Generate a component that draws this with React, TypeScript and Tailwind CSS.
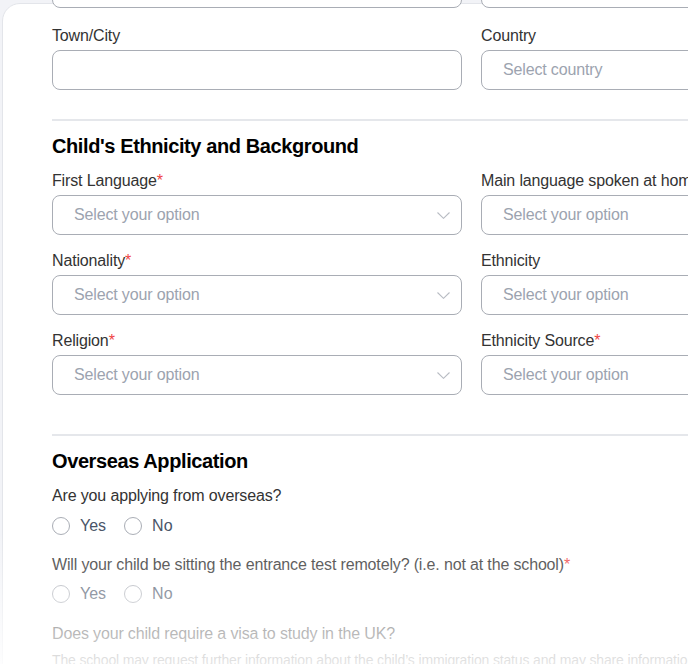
import React from "react"

function Label({ text, required }: { text: string; required?: boolean }) {
  return (
    <div className="h-[24px] leading-[24px] text-[16px] tracking-[-0.15px] text-[#333] whitespace-nowrap">
      {text}
      {required && <span className="text-[#ef4444]">*</span>}
    </div>
  )
}

function Chevron() {
  return (
    <svg width="13" height="7" viewBox="0 0 13 7" fill="none" className="shrink-0">
      <polyline points="0.5,0.5 6.5,6.3 12.5,0.5" stroke="#b8bcc3" strokeWidth="1.1" fill="none" />
    </svg>
  )
}

function Field({ label, required, placeholder, select }: { label: string; required?: boolean; placeholder?: string; select?: boolean }) {
  return (
    <div>
      <Label text={label} required={required} />
      <div className="mt-[2px] h-[40px] rounded-[8px] border border-[#a9adb5] bg-white flex items-center pl-[21px] pr-[11px]">
        <span className="flex-1 text-[16px] tracking-[-0.15px] text-[#9ca3af] whitespace-nowrap">{placeholder}</span>
        {select && <Chevron />}
      </div>
    </div>
  )
}

function Radio({ label }: { label: string }) {
  return (
    <div className="flex items-center gap-[10px]">
      <span className="w-[18px] h-[18px] rounded-full border border-[#a9adb5] bg-white" />
      <span className="text-[16px] text-[#4a5568]">{label}</span>
    </div>
  )
}

function YesNo() {
  return (
    <div className="flex items-center gap-[18px] h-[24px]">
      <Radio label="Yes" />
      <Radio label="No" />
    </div>
  )
}

export default function App() {
  return (
    <div className="relative h-[664px] overflow-hidden bg-[#f2f3f7] font-['Liberation_Sans',Arial,sans-serif]">
      <div className="ml-[2px] mt-[3px] w-[960px] min-h-[700px] bg-white border border-[#e3e5ea] rounded-t-[18px] pl-[49px] pt-[1px]">
        <div className="w-[839px]">
          {/* tail of the previous row */}
          <div className="grid grid-cols-2 gap-[19px] -mt-[37px]">
            <div className="h-[40px] rounded-[8px] border border-[#a9adb5] bg-white" />
            <div className="h-[40px] rounded-[8px] border border-[#a9adb5] bg-white" />
          </div>

          <div className="grid grid-cols-2 gap-[19px] mt-[16px]">
            <Field label="Town/City" />
            <Field label="Country" placeholder="Select country" />
          </div>

          <div className="mt-[29px] h-[2px] bg-[#e5e7eb]" />

          <h2 className="mt-[11px] text-[20px] leading-[28px] font-bold tracking-[-0.4px] text-black">Child's Ethnicity and Background</h2>

          <div className="mt-[9px] grid grid-cols-2 gap-x-[19px] gap-y-[14px]">
            <Field label="First Language" required placeholder="Select your option" select />
            <Field label="Main language spoken at home" placeholder="Select your option" select />
            <Field label="Nationality" required placeholder="Select your option" select />
            <Field label="Ethnicity" placeholder="Select your option" select />
            <Field label="Religion" required placeholder="Select your option" select />
            <Field label="Ethnicity Source" required placeholder="Select your option" select />
          </div>

          <div className="mt-[39px] h-[2px] bg-[#e5e7eb]" />

          <h2 className="mt-[11px] text-[20px] leading-[28px] font-bold tracking-[-0.4px] text-black">Overseas Application</h2>

          <div className="mt-[9px]">
            <Label text="Are you applying from overseas?" />
          </div>
          <div className="mt-[6px]">
            <YesNo />
          </div>

          <div className="mt-[15px]">
            <Label text="Will your child be sitting the entrance test remotely? (i.e. not at the school)" required />
          </div>
          <div className="mt-[5px]">
            <YesNo />
          </div>

          <div className="mt-[16px]">
            <Label text="Does your child require a visa to study in the UK?" />
          </div>
          <p className="mt-[4px] text-[14px] leading-[20px] tracking-[-0.15px] text-[#555] whitespace-nowrap">
            The school may request further information about the child’s immigration status and may share information with the relevant authorities.
          </p>
        </div>
      </div>

      <div className="pointer-events-none absolute left-0 right-0 bottom-0 h-[134px] bg-linear-to-b from-white/0 to-white/85" />
    </div>
  )
}
